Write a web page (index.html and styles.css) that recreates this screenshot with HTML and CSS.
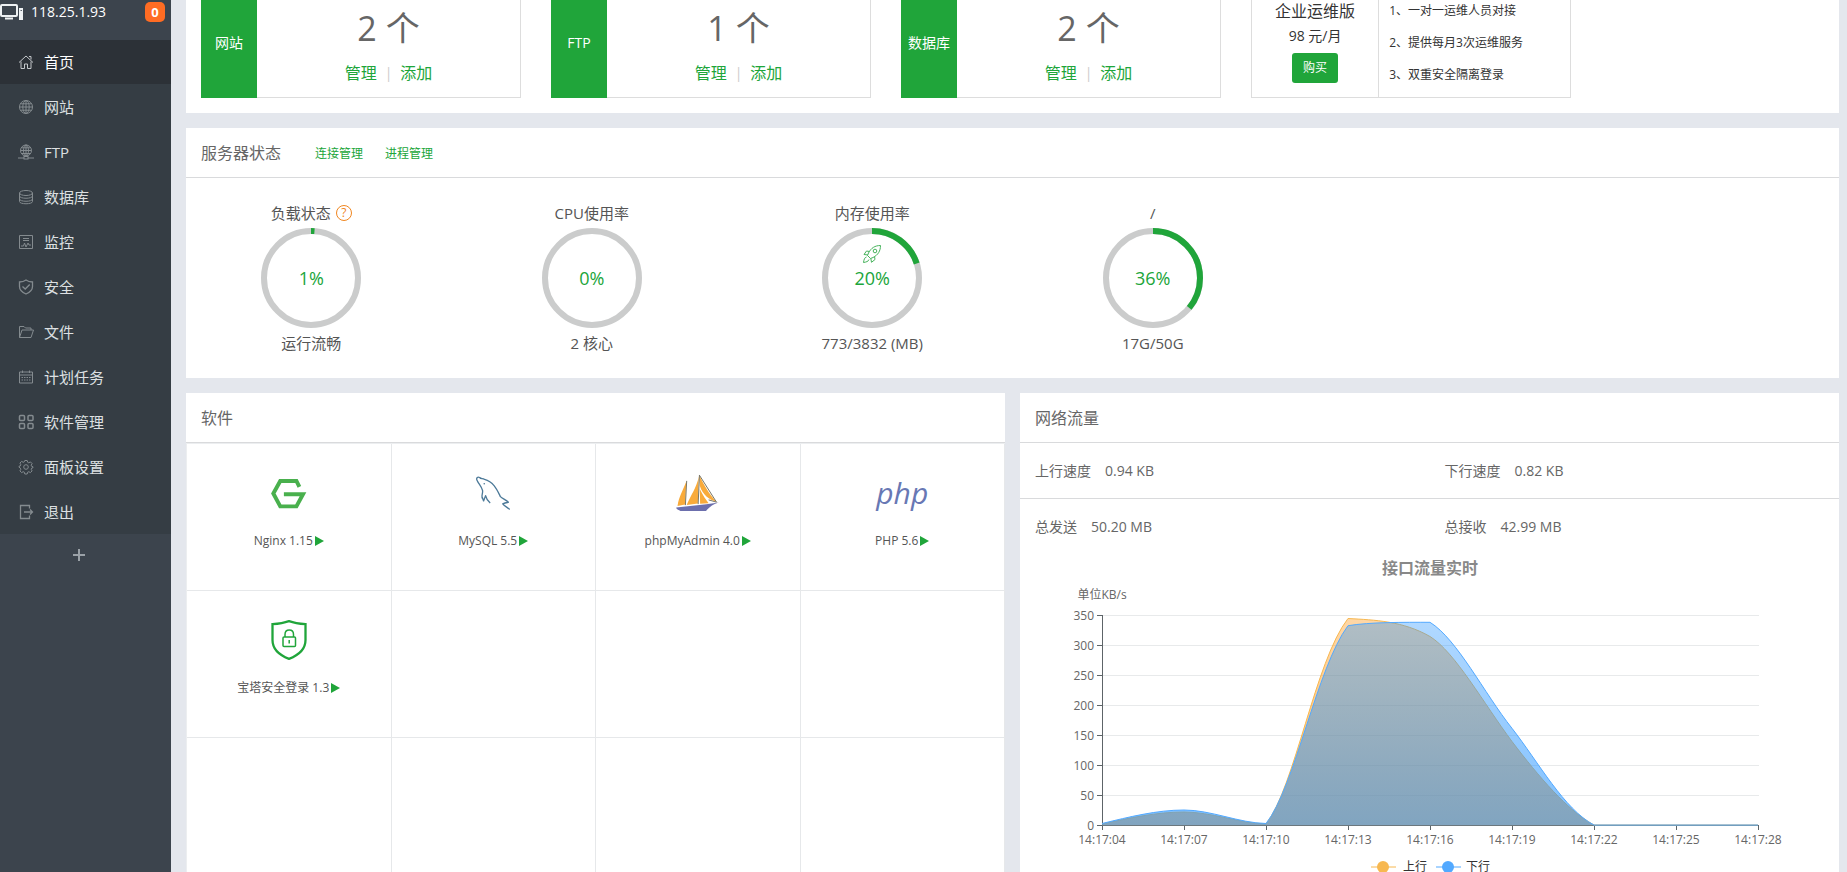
FILE: index.html
```html
<!DOCTYPE html>
<html lang="zh-CN">
<head>
<meta charset="utf-8">
<title>首页</title>
<link rel="stylesheet" href="styles.css">
</head>
<body>
<div class="app">
  <aside class="sidebar">
    <div class="host">
      <svg class="host-icon" viewBox="0 0 24 18" aria-hidden="true"><rect x="1" y="2" width="16" height="11" rx="1" fill="none" stroke="#eef1f3" stroke-width="2"/><path d="M5 15.500h8" stroke="#eef1f3" stroke-width="2"/><rect x="19" y="5" width="4" height="12" fill="#eef1f3"/><path d="M20.500 7.500h1.500" stroke="#59616a"/></svg>
      <span class="host-ip">118.25.1.93</span>
      <span class="badge">0</span>
    </div>
    <nav class="menu">
      <a class="menu-item active" href="#"><svg class="icon" viewBox="0 0 16 16"><path d="M1 8.500 8 2l7 6.500M3 7.500V14.500h3.500V10h3v4.500H13V7.500M11 2.500h2v3"/></svg>首页</a>
      <a class="menu-item" href="#"><svg class="icon" viewBox="0 0 16 16"><circle cx="8" cy="8" r="6.500"/><ellipse cx="8" cy="8" rx="3.200" ry="6.500"/><path d="M8 1.500v13M1.500 8h13M2.500 4.800h11M2.500 11.200h11"/></svg>网站</a>
      <a class="menu-item" href="#"><svg class="icon" viewBox="0 0 16 16"><circle cx="8" cy="6.500" r="5.500"/><ellipse cx="8" cy="6.500" rx="2.500" ry="5.500"/><path d="M8 1v11M2.500 6.500h11M3.500 3.800h9M3.500 9.500h9M0 14h6m4 0h6"/><rect x="6" y="12.500" width="4" height="2.500"/></svg>FTP</a>
      <a class="menu-item" href="#"><svg class="icon" viewBox="0 0 16 16"><ellipse cx="8" cy="4" rx="6.500" ry="2.500"/><path d="M1.500 4v8.500c0 3 13 3 13 0V4M1.500 7c0 3 13 3 13 0M1.500 10c0 3 13 3 13 0"/></svg>数据库</a>
      <a class="menu-item" href="#"><svg class="icon" viewBox="0 0 16 16"><path d="M1.500 1.500h13v13h-13zM5 4.500h6M5 6.500h6M3 12h2.500l1-3 1.500 4 2-4 1 2h2"/></svg>监控</a>
      <a class="menu-item" href="#"><svg class="icon" viewBox="0 0 16 16"><path stroke-width="1.300" d="M8 1C6 2.500 4 3 1.500 3v4.500c0 4 3 6 6.500 7.500 3.500-1.500 6.500-3.500 6.500-7.500V3C12 3 10 2.500 8 1zM4.500 7.500 7.200 10l4.500-4.500"/></svg>安全</a>
      <a class="menu-item" href="#"><svg class="icon" viewBox="0 0 16 16"><path d="M1.500 13.500v-11H6L7.500 4H13v2M1.500 13.500 4 6h11.500L13 13.500z"/></svg>文件</a>
      <a class="menu-item" href="#"><svg class="icon" viewBox="0 0 16 16"><path d="M1.500 3h13v11h-13zM1.500 6h13M4.500 1.500V4M11.500 1.500V4"/><path d="M3.500 8.500h9M3.500 11h9" stroke-dasharray="1.500 1"/></svg>计划任务</a>
      <a class="menu-item" href="#"><svg class="icon" viewBox="0 0 16 16"><g stroke-width="1.500"><rect x="1.500" y="1.500" width="5" height="5" rx="1"/><rect x="10" y="1.500" width="5" height="5" rx="1"/><rect x="1.500" y="9.500" width="5" height="5" rx="1"/><rect x="10" y="9.500" width="5" height="5" rx="1"/></g></svg>软件管理</a>
      <a class="menu-item" href="#"><svg class="icon" viewBox="0 0 16 16"><circle cx="8" cy="8" r="2.300"/><path d="M6.800 1.500h2.400l.5 1.800 1.100.5 1.600-.9 1.700 1.700-.9 1.600.4 1.100 1.400.5v.9l-1.400.5-.4 1.100.9 1.600-1.700 1.700-1.600-.9-1.100.5-.5 1.800H6.800l-.5-1.800-1.100-.5-1.600.9-1.700-1.700.9-1.600-.4-1.100L1 8.200v-.9l1.400-.5.4-1.100-.9-1.600 1.700-1.700 1.600.9 1.100-.5z"/></svg>面板设置</a>
      <a class="menu-item" href="#"><svg class="icon" viewBox="0 0 16 16"><path stroke-width="1.300" d="M11.500 4.500v-3h-9v13h9v-3M6 8h8.500M12 5.500 14.500 8 12 10.500"/></svg>退出</a>
    </nav>
    <button class="add" aria-label="添加菜单"><svg viewBox="0 0 14 14"><path d="M7 1v12M1 7h12"/></svg></button>
  </aside>

  <main class="main">
    <section class="panel overview">
      <article class="stat">
        <h3 class="stat-name">网站</h3>
        <div class="stat-body"><p class="stat-count">2 个</p><p class="stat-links"><a href="#">管理</a><i>|</i><a href="#">添加</a></p></div>
      </article>
      <article class="stat">
        <h3 class="stat-name">FTP</h3>
        <div class="stat-body"><p class="stat-count">1 个</p><p class="stat-links"><a href="#">管理</a><i>|</i><a href="#">添加</a></p></div>
      </article>
      <article class="stat">
        <h3 class="stat-name">数据库</h3>
        <div class="stat-body"><p class="stat-count">2 个</p><p class="stat-links"><a href="#">管理</a><i>|</i><a href="#">添加</a></p></div>
      </article>
      <article class="plan">
        <div class="plan-offer"><h3>企业运维版</h3><p>98 元/月</p><button class="buy">购买</button></div>
        <ul class="plan-list"><li>1、一对一运维人员对接</li><li>2、提供每月3次运维服务</li><li>3、双重安全隔离登录</li></ul>
      </article>
    </section>

    <section class="panel">
      <header class="panel-head"><h2>服务器状态</h2><a class="head-link" href="#">连接管理</a><a class="head-link" href="#">进程管理</a></header>
      <div class="gauges">
        <div class="gauge">
          <div class="gauge-label">负载状态<a class="help" href="#">?</a></div>
          <div class="ring"><svg viewBox="0 0 100 100"><circle class="track" cx="50" cy="50" r="47"/><circle class="value" cx="50" cy="50" r="47" pathLength="100" stroke-dasharray="1.200 98.800" transform="rotate(-90 50 50)"/></svg><span>1%</span></div>
          <div class="gauge-label">运行流畅</div>
        </div>
        <div class="gauge">
          <div class="gauge-label">CPU使用率</div>
          <div class="ring"><svg viewBox="0 0 100 100"><circle class="track" cx="50" cy="50" r="47"/></svg><span>0%</span></div>
          <div class="gauge-label">2 核心</div>
        </div>
        <div class="gauge">
          <div class="gauge-label">内存使用率</div>
          <div class="ring"><svg viewBox="0 0 100 100"><circle class="track" cx="50" cy="50" r="47"/><circle class="value" cx="50" cy="50" r="47" pathLength="100" stroke-dasharray="20 80" transform="rotate(-90 50 50)"/><g class="rocket"><path d="M58.500 17.500C53 17.500 49 20 46.500 25l-1 2.500 3 3 2.500-1C56 27 58.500 23 58.500 17.500z"/><circle cx="53" cy="23" r="1.800"/><path d="M47.500 23.500l-3-.5-2.500 3.500 4 .500M52.500 28.500l.5 3-3.500 2.800-.7-4M44.500 29c-2 .5-2.500 2.500-3 5.500 2.500-.4 5-1 5.500-3"/></g></svg><span>20%</span></div>
          <div class="gauge-label">773/3832 (MB)</div>
        </div>
        <div class="gauge">
          <div class="gauge-label">/</div>
          <div class="ring"><svg viewBox="0 0 100 100"><circle class="track" cx="50" cy="50" r="47"/><circle class="value" cx="50" cy="50" r="47" pathLength="100" stroke-dasharray="36 64" transform="rotate(-90 50 50)"/></svg><span>36%</span></div>
          <div class="gauge-label">17G/50G</div>
        </div>
      </div>
    </section>

    <div class="columns">
      <section class="panel">
        <header class="panel-head"><h2>软件</h2></header>
        <div class="apps">
          <a class="app-cell" href="#"><span class="app-logo"><svg width="37" height="33" viewBox="272 290 112 100"><path d="M361 320 352 302H303L282 340 303 379H352L372 342H314" fill="none" stroke="#49b04d" stroke-width="12"/></svg></span><span class="app-name">Nginx 1.15<i class="run"></i></span></a>
          <a class="app-cell" href="#"><span class="app-logo"><svg width="37" height="36" viewBox="885 283 112 108"><g fill="none" stroke="#4d7a99" stroke-width="4" stroke-linejoin="round"><path d="M908 355C903 346 909 340 908 330 905 316 896 310 892 300 887 292 893 287 899 290 903 295 908 292 914 296 942 303 953 330 962 348 968 354 980 358 986 365 980 366 974 367 969 370 974 377 984 380 990 387"/><path d="M907 350 911 361 917 345C919 355 925 362 931 367"/></g><circle cx="913" cy="309" r="2.500" fill="#4d7a99"/></svg></span><span class="app-name">MySQL 5.5<i class="run"></i></span></a>
          <a class="app-cell" href="#"><span class="app-logo"><svg width="45" height="38" viewBox="260 282 136 116"><g fill="#f9ab3b"><path d="M294 304 290 375 267 380C271 350 285 330 294 304z"/><path d="M332 290 329 372 295 377C306 350 325 325 332 290z"/><path d="M335 328C345 348 353 360 362 371L336 373z"/><path d="M334 287C345 310 365 345 385 366 365 362 343 345 335 318z"/></g><path d="M263 384 355 374 393 369C376 374 362 384 354 395H276C270 391 264 391 263 384z" fill="#6c6fad"/><path d="M295 303 291 377M334 285 330 374M334 286 386 368 362 361" fill="none" stroke="#777463" stroke-width="3"/></svg></span><span class="app-name">phpMyAdmin 4.0<i class="run"></i></span></a>
          <a class="app-cell" href="#"><span class="app-logo php">php</span><span class="app-name">PHP 5.6<i class="run"></i></span></a>
          <a class="app-cell" href="#"><span class="app-logo"><svg width="36" height="40" viewBox="0 0 36 40"><path d="M18 1.200C13 3 8 3.800 1.500 4.200V20C1.500 29 8 35 18 38.800 28 35 34.500 29 34.500 20V4.200C28 3.800 23 3 18 1.200z" fill="none" stroke="#20a53a" stroke-width="2.300"/><rect x="12" y="17" width="12.500" height="9.500" rx="1" fill="none" stroke="#20a53a" stroke-width="1.500"/><path d="M14 17V14.500c0-6 8.500-6 8.500 0V17M18.200 20v3.500" fill="none" stroke="#20a53a" stroke-width="1.500"/></svg></span><span class="app-name">宝塔安全登录 1.3<i class="run"></i></span></a>
          <div class="app-cell"></div><div class="app-cell"></div><div class="app-cell"></div>
          <div class="app-cell"></div><div class="app-cell"></div><div class="app-cell"></div><div class="app-cell"></div>
        </div>
      </section>

      <section class="panel">
        <header class="panel-head"><h2>网络流量</h2></header>
        <dl class="traffic">
          <div><dt>上行速度</dt><dd>0.94 KB</dd></div><div><dt>下行速度</dt><dd>0.82 KB</dd></div>
        </dl>
        <dl class="traffic">
          <div><dt>总发送</dt><dd>50.20 MB</dd></div><div><dt>总接收</dt><dd>42.99 MB</dd></div>
        </dl>
        <svg class="chart" viewBox="0 0 819 330" role="img" aria-label="接口流量实时">
          <defs>
            <linearGradient id="up" x1="0" y1="0" x2="0" y2="1"><stop offset="0" stop-color="#ff8c00" stop-opacity=".35"/><stop offset="1" stop-color="#ff8c00" stop-opacity=".56"/></linearGradient>
            <linearGradient id="down" x1="0" y1="0" x2="0" y2="1"><stop offset="0" stop-color="#1e90ff" stop-opacity=".35"/><stop offset="1" stop-color="#1e90ff" stop-opacity=".56"/></linearGradient>
          </defs>
          <text class="chart-title" x="410" y="19">接口流量实时</text>
          <text class="tick" x="82" y="44">单位KB/s</text>
          <path class="grid" d="M82 60.500H739M82 90.500H739M82 120.500H739M82 150.500H739M82 180.500H739M82 210.500H739M82 240.500H739"/>
          <path class="axis" d="M82.500 60V275M77 60.500h5M77 90.500h5M77 120.500h5M77 150.500h5M77 180.500h5M77 210.500h5M77 240.500h5M77 270.500H739M164.500 270v5M246.500 270v5M328.500 270v5M410.500 270v5M492.500 270v5M574.500 270v5M656.500 270v5M738.500 270v5"/>
          <g class="tick y"><text x="74" y="65">350</text><text x="74" y="95">300</text><text x="74" y="125">250</text><text x="74" y="155">200</text><text x="74" y="185">150</text><text x="74" y="215">100</text><text x="74" y="245">50</text><text x="74" y="275">0</text></g>
          <g class="tick"><text x="82" y="289">14:17:04</text><text x="164" y="289">14:17:07</text><text x="246" y="289">14:17:10</text><text x="328" y="289">14:17:13</text><text x="410" y="289">14:17:16</text><text x="492" y="289">14:17:19</text><text x="574" y="289">14:17:22</text><text x="656" y="289">14:17:25</text><text x="738" y="289">14:17:28</text></g>
          <path fill="url(#up)" d="M82 269C109 263 137 257 164 257S219 268 246 269C275 232 295 106 328 63.500 355 65 383 66 410 81.500 435 97 464 149 492 186.500 519 222 548 256 574 270H738V270.500H82z"/>
          <path class="line-up" d="M82 269C109 263 137 257 164 257S219 268 246 269C275 232 295 106 328 63.500 355 65 383 66 410 81.500 435 97 464 149 492 186.500 519 222 548 256 574 270H738"/>
          <path fill="url(#down)" d="M82 268.500C109 262 137 255 164 255S219 268 246 268.500C275 232 297 112 328 70.700 350 67 385 67.300 410 67.300 437 84 464 138 492 173.300 519 208 544 254 574 270H738V270.500H82z"/>
          <path class="line-down" d="M82 268.500C109 262 137 255 164 255S219 268 246 268.500C275 232 297 112 328 70.700 350 67 385 67.300 410 67.300 437 84 464 138 492 173.300 519 208 544 254 574 270H738"/>
          <path class="line-up" d="M351 312h25"/><circle cx="363" cy="312" r="6" fill="#f7b851"/><text class="legend" x="383" y="316">上行</text>
          <path class="line-down" d="M416 312h25"/><circle cx="428" cy="312" r="6" fill="#52a9ff"/><text class="legend" x="446" y="316">下行</text>
        </svg>
      </section>
    </div>
  </main>
</div>
</body>
</html>
```
FILE: styles.css
```css
* { box-sizing: border-box; }
body, h2, h3, p, ul, dl, dd { margin: 0; padding: 0; }
body {
  font-family: "Open Sans", "Noto Sans CJK SC", sans-serif;
  font-size: 12px;
  line-height: 20px;
  color: #666;
  background: #e4e7ed;
}
h2, h3 { font-weight: 400; }
a { color: #20a53a; text-decoration: none; }
i { font-style: normal; }
ul { list-style: none; }
button { font: inherit; border: 0; cursor: pointer; }

.app { display: flex; height: 100vh; overflow: hidden; }

.sidebar { flex: none; width: 171px; background: #3c444d; }
.host { display: flex; align-items: center; height: 40px; padding: 2px 6px 18px 0; color: #fff; font-size: 14px; }
.host-icon { width: 24px; height: 18px; margin-right: 7px; }
.badge { margin-left: auto; width: 20px; height: 20px; border-radius: 5px; background: #ff6c23; text-align: center; font-weight: 700; font-size: 13px; }
.menu { background: #353d44; }
.menu-item { display: flex; align-items: center; gap: 10px; height: 45px; padding-left: 18px; font-size: 15px; color: #dde0e2; }
.menu-item.active { height: 44px; background: #2c3137; color: #fff; }
.icon { width: 16px; height: 16px; fill: none; stroke: #848b8f; }
.active .icon { stroke: #c3c7ca; }
.add { display: block; width: 100%; height: 40px; padding: 0 14px 0 0; background: none; }
.add svg { width: 14px; height: 14px; vertical-align: middle; stroke: #9aa1a7; stroke-width: 2; }

.main { flex: 1; min-width: 0; padding: 0 8px 0 15px; }
.panel { background: #fff; margin-bottom: 15px; }
.panel-head { display: flex; align-items: center; height: 50px; padding: 0 15px; border-bottom: 1px solid #d9dadc; }
.panel-head h2 { font-size: 16px; margin-right: 12px; }
.head-link { margin-left: 22px; padding-top: 2px; }

.overview { display: grid; grid-template-columns: repeat(4, 320px); gap: 30px; padding: 0 15px 15px; }
.stat { display: flex; height: 98px; }
.stat-name { display: flex; align-items: center; justify-content: center; width: 56px; padding-bottom: 12px; font-size: 14px; color: #fff; background: #20a53a; }
.stat-body { flex: 1; padding-top: 8px; text-align: center; border: solid #ddd; border-width: 0 1px 1px 0; }
.stat-count { font-size: 34px; line-height: 40px; margin-bottom: 15px; }
.stat-links { display: flex; justify-content: center; gap: 8px; font-size: 16px; }
.stat-links i { color: #ccc; font-size: 14px; }
.plan { display: flex; height: 98px; border: solid #ddd; border-width: 0 1px 1px; color: #333; }
.plan-offer { width: 40%; text-align: center; border-right: 1px solid #ddd; }
.plan-offer h3 { font-size: 16px; line-height: 22px; }
.plan-offer p { font-size: 14px; line-height: 28px; margin-bottom: 3px; }
.buy { width: 46px; height: 30px; border-radius: 3px; background: #20a53a; color: #fff; }
.plan-list { padding-left: 10px; }
.plan-list li { line-height: 22px; margin-bottom: 10px; }

.gauges { display: grid; grid-template-columns: repeat(6, 1fr); margin: 0 -15px; padding: 25px 0; }
.gauge { display: flex; flex-direction: column; align-items: center; gap: 5px; color: #555; }
.gauge-label { display: flex; align-items: center; font-size: 15px; }
.help { width: 16px; height: 16px; margin-left: 5px; border: 1px solid #f0861f; border-radius: 50%; color: #f0861f; font-size: 12px; line-height: 14px; text-align: center; }
.ring { display: grid; place-items: center; width: 100px; height: 100px; font-size: 18px; color: #20a53a; }
.ring > * { grid-area: 1 / 1; }
.ring circle, .rocket path { fill: none; }
.track { stroke: #cbcccc; stroke-width: 6; }
.value { stroke: #20a53a; stroke-width: 6; }
.rocket { stroke: #47b35c; stroke-width: 1; }

.columns { display: grid; grid-template-columns: 1fr 1fr; gap: 15px; }
.apps { display: grid; grid-template-columns: repeat(4, 1fr); grid-auto-rows: 147px; border: solid #eceef0; border-width: 1px 0 0 1px; }
.app-cell { display: flex; flex-direction: column; align-items: center; gap: 18px; padding-top: 29px; color: #555; border: solid #e6e8ea; border-width: 0 1px 1px 0; }
.app-logo { display: flex; align-items: center; height: 40px; }
.php { font-size: 30px; font-style: italic; color: #6878b4; }
.app-name { display: flex; align-items: center; }
.run { margin-left: 2px; border: solid transparent; border-width: 5px 0 5px 9px; border-left-color: #20a53a; }

.traffic { display: grid; grid-template-columns: 1fr 1fr; height: 56px; align-items: center; font-size: 14px; border-bottom: 1px solid #d9dadc; }
.traffic + .traffic { border-bottom: 0; }
.traffic div { display: flex; gap: 14px; padding-left: 15px; }
.chart { display: block; width: 100%; height: auto; }
.chart text { font-size: 12px; fill: #666; }
.chart .chart-title { font-size: 16px; font-weight: 700; fill: #888; text-anchor: middle; }
.tick { text-anchor: middle; }
.tick.y { text-anchor: end; }
.chart .legend { fill: #333; }
.grid { stroke: #e8eaeb; }
.axis { fill: none; stroke: #5d6468; }
.line-up { fill: none; stroke: #f7b851; }
.line-down { fill: none; stroke: #52a9ff; }
```
